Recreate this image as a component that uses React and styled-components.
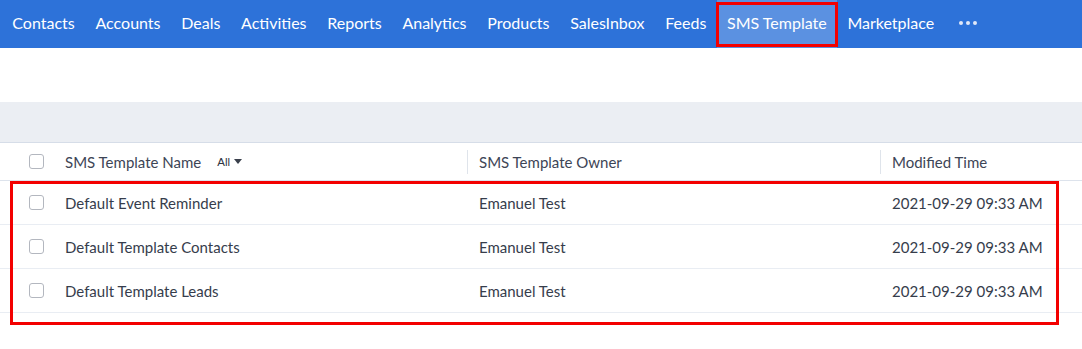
import React from "react";
import styled, { createGlobalStyle } from "styled-components";

const Global = createGlobalStyle`
  html, body { margin: 0; padding: 0; background: #fff; }
  body { font-family: Lato, "Open Sans", sans-serif; }
  * { box-sizing: border-box; }
`;

const Page = styled.div`
  width: 1082px;
  height: 349px;
  position: relative;
  overflow: hidden;
  background: #fff;
`;

const Nav = styled.nav`
  height: 48px;
  background: #2d72d9;
  display: flex;
  align-items: stretch;
  padding-left: 2px;
`;

const NavItem = styled.div`
  position: relative;
  display: flex;
  align-items: center;
  padding: 0 10.35px 3px;
  color: #fff;
  font-size: 16px;
  white-space: nowrap;
  background: ${(p) => (p.$active ? "#5b91e1" : "transparent")};
`;

const Highlight = styled.span`
  position: absolute;
  left: -1px;
  right: -1px;
  top: 2px;
  bottom: 1px;
  border: 3px solid #f30000;
  pointer-events: none;
`;

const Dots = styled.div`
  display: flex;
  align-items: center;
  gap: 3px;
  padding: 0 12px 3px 14px;
  span {
    width: 4px;
    height: 4px;
    border-radius: 50%;
    background: #dfe8f8;
  }
`;

const Spacer = styled.div`
  height: 54px;
  background: #fff;
`;

const Band = styled.div`
  height: 41px;
  background: #ebeef3;
  border-bottom: 1px solid #d6dde8;
`;

const Table = styled.div`
  position: relative;
`;

const Row = styled.div`
  display: grid;
  grid-template-columns: 53px 414px 413px 1fr;
  align-items: center;
  height: ${(p) => (p.$header ? 38 : 44)}px;
  border-bottom: 1px solid ${(p) => (p.$header ? "#dde3ec" : "#e9edf3")};
  color: ${(p) => (p.$header ? "#3d4556" : "#363d4c")};
  font-size: 15px;
`;

const CheckCell = styled.div`
  display: flex;
  justify-content: flex-end;
  padding-right: 9px;
`;

const Check = styled.span`
  width: 15px;
  height: 15px;
  border: 1px solid #b3b7bf;
  border-radius: 3px;
  background: #fff;
`;

const Cell = styled.div`
  height: 100%;
  display: flex;
  align-items: center;
  padding-left: 12px;
  white-space: nowrap;
  position: relative;
  ${(p) =>
    p.$divider
      ? `&::before {
    content: "";
    position: absolute;
    left: 0;
    top: 7px;
    bottom: 6px;
    width: 1px;
    background: #dfe4eb;
  }`
      : ""}
`;

const Filter = styled.span`
  margin-left: 16px;
  font-family: "Liberation Sans", Arial, sans-serif;
  font-size: 11.5px;
  color: #2f3542;
  display: inline-flex;
  align-items: center;
  gap: 4px;
`;

const Caret = styled.span`
  width: 0;
  height: 0;
  border-left: 4px solid transparent;
  border-right: 4px solid transparent;
  border-top: 5px solid #3a404c;
`;

const Annotation = styled.div`
  position: absolute;
  left: 10px;
  top: 38px;
  width: 1049px;
  height: 144px;
  border: 3px solid #f30000;
  pointer-events: none;
`;

const navItems = [
  "Contacts",
  "Accounts",
  "Deals",
  "Activities",
  "Reports",
  "Analytics",
  "Products",
  "SalesInbox",
  "Feeds",
  "SMS Template",
  "Marketplace",
];

const rows = [
  "Default Event Reminder",
  "Default Template Contacts",
  "Default Template Leads",
];

export default function App() {
  return (
    <Page>
      <Global />
      <Nav>
        {navItems.map((n) => (
          <NavItem key={n} $active={n === "SMS Template"}>
            {n}
            {n === "SMS Template" && <Highlight />}
          </NavItem>
        ))}
        <Dots>
          <span />
          <span />
          <span />
        </Dots>
      </Nav>
      <Spacer />
      <Band />
      <Table>
        <Row $header>
          <CheckCell>
            <Check />
          </CheckCell>
          <Cell>
            SMS Template Name
            <Filter>
              All <Caret />
            </Filter>
          </Cell>
          <Cell $divider>SMS Template Owner</Cell>
          <Cell $divider>Modified Time</Cell>
        </Row>
        {rows.map((r) => (
          <Row key={r}>
            <CheckCell>
              <Check />
            </CheckCell>
            <Cell>{r}</Cell>
            <Cell>Emanuel Test</Cell>
            <Cell>2021-09-29 09:33 AM</Cell>
          </Row>
        ))}
        <Annotation />
      </Table>
    </Page>
  );
}
